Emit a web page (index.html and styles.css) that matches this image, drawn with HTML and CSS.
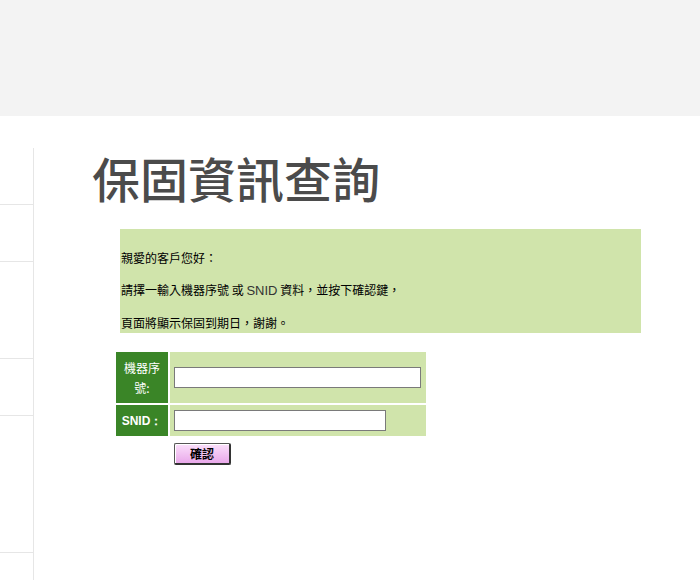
FILE: index.html
```html
<!DOCTYPE html>
<html lang="zh-Hant">
<head>
  <meta charset="UTF-8">
  <title>保固資訊查詢</title>
  <link rel="stylesheet" href="styles.css">
</head>
<body>

  <!-- Header band -->
  <header class="topbar"></header>

  <div class="page">
    <!-- Left menu column -->
    <nav class="side">
      <div class="side-item h56"></div>
      <div class="side-item h56"></div>
      <div class="side-item h96"></div>
      <div class="side-item h56"></div>
      <div class="side-item h136"></div>
      <div class="side-item last"></div>
    </nav>

    <!-- Warranty lookup -->
    <main class="content">
      <h1 class="title">保固資訊查詢</h1>

      <div class="notice">
        <p>親愛的客戶您好：</p>
        <p>請擇一輸入機器序號 或 <span class="en">SNID</span> 資料，並按下確認鍵，</p>
        <p>頁面將顯示保固到期日，謝謝。</p>
      </div>

      <form class="lookup" onsubmit="return false;">
        <div class="label tall">機器序<br>號:</div>
        <div class="field"><input type="text" class="inp long"></div>
        <div class="label en-label">SNID：</div>
        <div class="field"><input type="text" class="inp short"></div>
        <div></div>
        <div class="actions"><button type="submit" class="btn">確認</button></div>
      </form>
    </main>
  </div>

</body>
</html>
```
FILE: styles.css
```css
* {
  margin: 0;
  padding: 0;
  box-sizing: border-box;
}

html, body {
  height: 100%;
}

body {
  background: #fff;
  font-family: "Noto Sans CJK TC", "Liberation Sans", sans-serif;
  color: #000;
  overflow: hidden;
}

/* Header band */
.topbar {
  height: 116px;
  background-color: #f3f3f3;
}

.page {
  display: flex;
  align-items: stretch;
  height: calc(100% - 116px);
  overflow: hidden;
}

/* Left menu column */
.side {
  width: 34px;
  margin-top: 32px;
  border-right: 1px solid #e6e6e6;
  flex-shrink: 0;
}

.side-item {
  border-bottom: 1px solid #e6e6e6;
}

.h56 { height: 57px; }
.h96 { height: 97px; }
.h136 { height: 137px; }

.side-item.last {
  border-bottom: none;
  height: 20px;
}

/* Content */
.content {
  padding-left: 58px;
}

.title {
  margin-top: 37px;
  font-size: 48px;
  line-height: 48px;
  font-weight: 500;
  color: #4b4b4b;
}

.notice {
  margin-top: 28px;
  margin-left: 28px;
  width: 521px;
  height: 104px;
  background-color: #d0e4ab;
  padding: 7px 0 0 1px;
  font-size: 12px;
}

.notice p {
  margin-top: 12px;
  line-height: 20px;
}

.notice .en {
  font-family: "Liberation Sans", sans-serif;
  font-size: 13px;
  color: #333;
}

/* Lookup form */
.lookup {
  margin-top: 19px;
  margin-left: 24px;
  display: grid;
  grid-template-columns: 52px 256px;
  grid-template-rows: 51px 31px auto;
  gap: 2px;
}

.label {
  background-color: #3a8527;
  color: #fff;
  font-size: 12px;
  line-height: 20px;
  text-align: center;
  display: flex;
  align-items: center;
  justify-content: center;
}

.en-label {
  font-family: "Liberation Sans", sans-serif;
  font-weight: bold;
}

.field {
  background-color: #d0e4ab;
  display: flex;
  align-items: center;
  padding-left: 4px;
}

.inp {
  height: 21px;
  border: 1px solid #7a7a7a;
  background: #fff;
  font-size: 12px;
}

.long { width: 247px; }
.short { width: 212px; }

.actions {
  display: flex;
  padding-left: 4px;
  padding-top: 5px;
}

.btn {
  width: 57px;
  height: 22px;
  font-family: "Noto Sans CJK TC", sans-serif;
  font-size: 12px;
  font-weight: bold;
  color: #000;
  background: linear-gradient(#fbe0fb, #e9a8ea);
  border: 1px solid #555;
  border-right: 2px solid #333;
  border-bottom: 2px solid #333;
  border-radius: 2px;
  box-shadow: inset 1px 1px 0 #fff;
  cursor: pointer;
}
```
